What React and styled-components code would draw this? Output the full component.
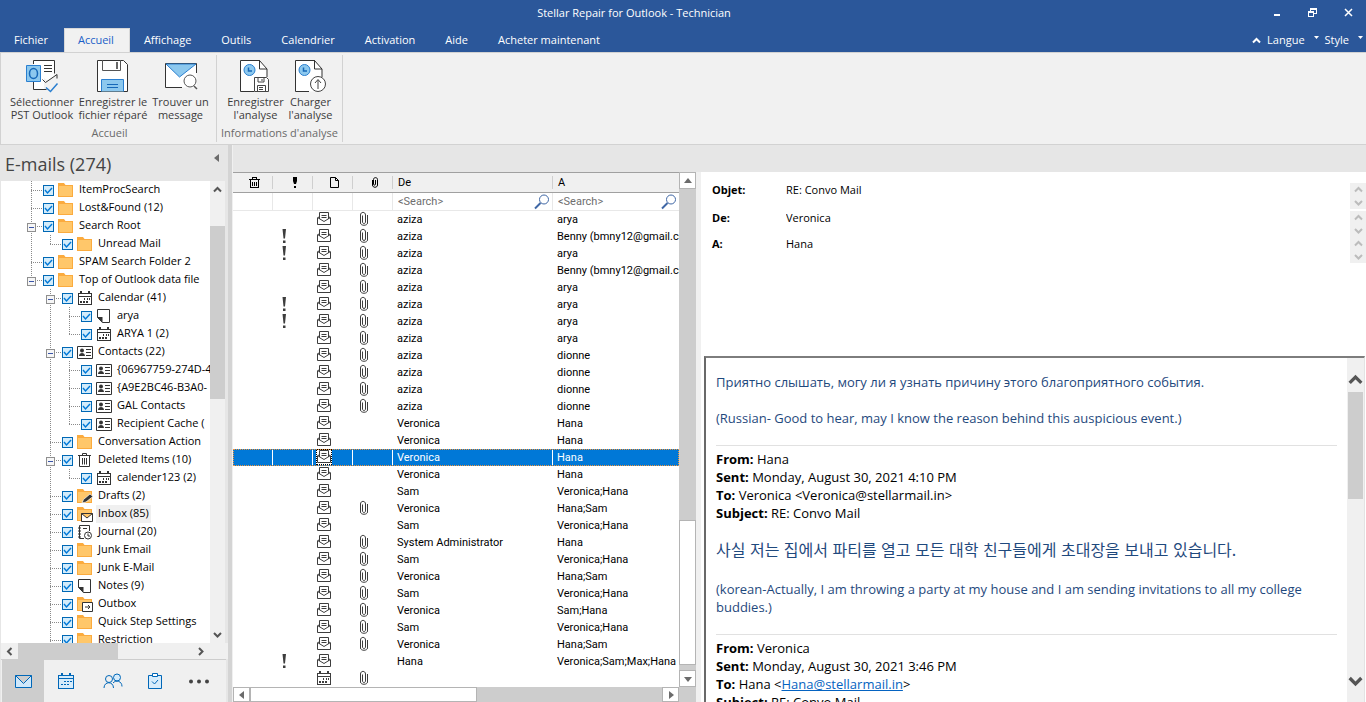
import React, { useState } from "react";
import styled, { createGlobalStyle, css } from "styled-components";

const ui = '"Open Sans", "Noto Sans", sans-serif';
const listFont = 'Roboto, "Liberation Sans", sans-serif';

const GlobalStyle = createGlobalStyle`
  * { box-sizing: border-box; }
  html, body, #root { height: 100%; }
  body { margin: 0; font: 11px/18px ${ui}; color: #000; background: #f0f0f0; }
  button, input { font: inherit; color: inherit; padding: 0; margin: 0; border: 0; background: none; }
  svg { display: block; flex: none; }
`;

const Window = styled.div`
  height: 100vh;
  display: flex;
  flex-direction: column;
  overflow: hidden;
`;

/* ---------- title bar and menu ---------- */
const TitleBar = styled.header`
  display: flex;
  align-items: center;
  height: 28px;
  flex: none;
  background: #2b579a;
  color: #fff;
`;
const Title = styled.h1`
  flex: 1;
  margin: 0;
  padding: 0 0 2px 10px;
  font-size: 11px;
  line-height: 24px;
  font-weight: 400;
  text-align: center;
`;
const WindowButtons = styled.div`
  display: flex;
  align-items: center;
  width: 108px;
  padding-bottom: 4px;
`;
const WindowButton = styled.button`
  flex: 1;
  height: 24px;
  display: grid;
  place-items: center;
`;
const MenuBar = styled.nav`
  display: flex;
  height: 24px;
  flex: none;
  background: #2b579a;
  color: #fff;
`;
const MenuTab = styled.button`
  padding: 0 15px 2px 13px;
  line-height: 20px;
  white-space: nowrap;
  border: 1px solid ${(p) => (p.$active ? "#d8d8d8" : "transparent")};
  border-bottom: 0;
  background: ${(p) => (p.$active ? "#f1f1f1" : "transparent")};
  background-clip: padding-box;
  color: ${(p) => (p.$active ? "#1a5fc8" : "#fff")};
`;
const MenuEnd = styled.div`
  display: flex;
  align-items: center;
  gap: 6px;
  margin-left: auto;
  padding-right: 3px;
`;
const MenuDrop = styled.button`
  display: flex;
  align-items: center;
  gap: 9px;
  line-height: 24px;
`;

/* ---------- ribbon ---------- */
const Ribbon = styled.section`
  display: flex;
  flex: none;
  height: 93px;
  padding-left: 2px;
  border: 1px solid #d2d2d2;
  border-right: 0;
  background: #f1f1f1;
`;
const Group = styled.div`
  display: flex;
  flex-direction: column;
  align-items: center;
  margin: 2px 0;
  padding: 0 4px;
  border-right: 1px solid #d2d2d2;
  color: #6a6a6a;
`;
const GroupButtons = styled.div`
  display: flex;
  height: 70px;
`;
const RibbonButton = styled.button`
  width: ${(p) => p.$w}px;
  display: flex;
  flex-direction: column;
  align-items: center;
  justify-content: flex-start;
  gap: 2px;
  padding-top: 5px;
  line-height: 13px;
  color: #3c3c3c;
  white-space: pre;
`;

/* ---------- folder panel ---------- */
const Main = styled.main`
  flex: 1;
  min-height: 0;
  display: flex;
  background: #e6e6e6;
`;
const Sidebar = styled.aside`
  width: 228px;
  flex: none;
  display: flex;
  flex-direction: column;
  padding-left: 1px;
`;
const Splitter = styled.div`
  width: 5px;
  flex: none;
  background: #d4d4d4;
  border-right: 1px solid #f0f0f0;
`;
const PanelHead = styled.div`
  display: flex;
  justify-content: space-between;
  align-items: flex-start;
  height: 36px;
  flex: none;
  padding: 8px 7px 0 4px;
`;
const PanelTitle = styled.h2`
  margin: 0;
  font-size: 18px;
  line-height: 22px;
  font-weight: 400;
  color: #444;
`;
const Collapse = styled.button`
  height: 10px;
  display: grid;
  place-items: center;
`;
const TreeArea = styled.div`
  flex: 1;
  min-height: 0;
  display: flex;
  margin-right: 3px;
`;
const Tree = styled.ul`
  flex: 1;
  min-width: 0;
  margin: 0;
  padding: 0 0 0 21px;
  list-style: none;
  overflow: hidden;
  background: #fff;
`;
const TreeRow = styled.li`
  display: flex;
  align-items: center;
  height: 18px;
  white-space: nowrap;
`;
const Expander = styled.button`
  width: 19px;
  height: 18px;
  flex: none;
`;
const FolderLabel = styled.label`
  display: flex;
  align-items: center;
  height: 18px;
`;
const Check = styled.input`
  appearance: none;
  width: 11px;
  height: 11px;
  margin: 0 4px 0 2px;
  flex: none;
  border: 1px solid #0068b5;
  background: #d3ecfb;
  &:checked {
    background: #d3ecfb url("data:image/svg+xml,%3Csvg xmlns='http://www.w3.org/2000/svg' width='9' height='9'%3E%3Cpath d='M1 4l2.5 3L8 2' fill='none' stroke='%230078d7' stroke-width='1.4'/%3E%3C/svg%3E");
  }
`;
const FolderName = styled.span`
  margin-left: 3px;
  padding: 0 2px 2px;
  line-height: 16px;
  background: ${(p) => (p.$active ? "#f0f0f0" : "none")};
`;
const VScroll = styled.div`
  width: ${(p) => p.$size}px;
  flex: none;
  display: flex;
  flex-direction: column;
  background: #f0f0f0;
`;
const HScroll = styled.div`
  display: flex;
  height: 16px;
  flex: none;
  background: #f0f0f0;
`;
const ScrollButton = styled.button`
  flex: 0 0 ${(p) => p.$size}px;
  display: grid;
  place-items: center;
`;
const Gap = styled.div`
  flex: ${(p) => p.$part} 1 0;
`;
const Thumb = styled.div`
  flex: ${(p) => p.$part} 1 0;
  background: #cdcdcd;
  margin: ${(p) => p.$inset || 0};
`;
const NavBar = styled.nav`
  display: flex;
  height: 43px;
  flex: none;
  margin-right: 2px;
  padding-left: 1px;
  border-top: 1px solid #cdcdcd;
  background: #f0f0f0;
`;
const NavButton = styled.button`
  width: ${(p) => p.$w}px;
  display: grid;
  place-items: center;
  background: ${(p) => (p.$active ? "#cdcdcd" : "none")};
`;

/* ---------- message list ---------- */
const ListPane = styled.section`
  width: 463px;
  flex: none;
  display: flex;
  flex-direction: column;
  padding-top: 27px;
`;
const ListBody = styled.div`
  flex: 1;
  min-height: 0;
  display: flex;
`;
const TableClip = styled.div`
  flex: 1;
  min-width: 0;
  overflow: hidden;
  background: #fff;
`;
const MailTable = styled.table`
  width: 100%;
  table-layout: fixed;
  border-spacing: 0;
  font-family: ${listFont};
  line-height: 17px;
`;
const HeadCell = styled.th`
  height: 21px;
  padding: 0 0 0 ${(p) => (p.$text ? 5 : 3)}px;
  text-align: left;
  font-weight: 400;
  border-top: 1px solid #a0a0a0;
  border-bottom: 1px solid #a0a0a0;
  background: #f0f0f0 linear-gradient(#cfcfcf, #cfcfcf) no-repeat right 3px / 1px 13px;
  background-size: ${(p) => (p.$last ? "0 0" : "1px 13px")};
  svg { margin: 0 auto; }
`;
const SearchCell = styled.td`
  height: 18px;
  padding: 0 0 0 5px;
  border-bottom: 1px solid #e8e8e8;
  border-right: ${(p) => (p.$last ? "0" : "1px solid #e8e8e8")};
`;
const SearchBox = styled.label`
  display: flex;
  align-items: center;
  padding-right: 2px;
`;
const SearchInput = styled.input`
  flex: 1;
  min-width: 0;
  height: 17px;
  outline: 0;
  &::placeholder { color: #6e6e6e; opacity: 1; }
`;
const Row = styled.tr`
  ${(p) =>
    p.$selected &&
    css`
      background: #0078d7;
      color: #fff;
      outline: 1px dotted #f0953c;
      outline-offset: -1px;
    `}
`;
const Cell = styled.td`
  height: 17px;
  padding: 0 0 0 ${(p) => (p.$icon ? 3 : 4)}px;
  overflow: hidden;
  vertical-align: top;
  white-space: nowrap;
  border-right: ${(p) => (p.$divide ? "1px solid #fff" : "0")};
`;
const IconBox = styled.span`
  display: block;
  width: 16px;
  height: 16px;
  color: #3d3d3d;
  ${(p) =>
    p.$focus &&
    css`
      background: #fff;
      outline: 1px dotted #000;
      outline-offset: -1px;
    `}
`;
const VTrack = styled.div`
  width: 17px;
  flex: none;
  display: flex;
  flex-direction: column;
  background: #cdcdcd;
`;
const HTrack = styled.div`
  display: flex;
  height: 15px;
  flex: none;
  padding-right: 17px;
  background: #cdcdcd;
`;
const BoxButton = styled.button`
  flex: 0 0 17px;
  display: grid;
  place-items: center;
  border: 1px solid #b4b4b4;
  background: #fff;
`;
const BoxThumb = styled.div`
  flex: ${(p) => p.$part} 1 0;
  border: 1px solid #b4b4b4;
  background: #fff;
`;

/* ---------- reading pane ---------- */
const Reader = styled.section`
  flex: 1;
  min-width: 0;
  display: flex;
  flex-direction: column;
  margin-top: 27px;
  border-left: 5px solid #f0f0f0;
  background: #fff;
`;
const Fields = styled.div`
  flex: none;
  height: 184px;
  padding-top: 11px;
`;
const Field = styled.div`
  display: flex;
  height: 26px;
  margin-bottom: ${(p) => (p.$after ? 2 : 0)}px;
  padding-left: 11px;
`;
const FieldLabel = styled.label`
  width: 74px;
  line-height: 14px;
  font-weight: 700;
`;
const FieldValue = styled.input`
  flex: 1;
  min-width: 0;
  height: 14px;
  outline: 0;
`;
const Spinner = styled.div`
  width: 16px;
  display: flex;
  flex-direction: column;
  background: #f0f0f0;
`;
const MessageFrame = styled.div`
  flex: 1;
  min-height: 0;
  display: flex;
  margin: 0 1px 0 3px;
  border: 2px solid #696969;
  border-top-color: #7d7d7d;
  border-right: 1px solid #e3e3e3;
  border-bottom: 0;
`;
const Message = styled.article`
  flex: 1;
  min-width: 0;
  padding: 15px 10px 0;
  overflow: hidden;
  font-size: 13px;
  line-height: 18px;
`;
const Para = styled.p`
  margin: 0 0 18px;
  color: #1f497d;
`;
const Korean = styled(Para)`
  margin-bottom: 22px;
  font: 16px/18px "Noto Sans CJK KR", sans-serif;
`;
const MailHeader = styled.p`
  margin: 0 0 18px;
  padding-top: 4px;
  border-top: 1px solid #e1e1e1;
`;
const MailLink = styled.a`
  color: #0563c1;
`;

/* ---------- drawings ---------- */
const Svg = ({ w = 16, h = 16, children, ...rest }) => (
  <svg width={w} height={h} viewBox={`0 0 ${w} ${h}`} fill="none" overflow="visible" aria-hidden="true" {...rest}>
    {children}
  </svg>
);
const Triangle = ({ dir, color = "#6b6b6b" }) => {
  const d = { up: "M0 6l4-5 4 5z", down: "M0 2l4 5 4-5z", left: "M6 0L1 4l5 4z", right: "M2 0l5 4-5 4z" }[dir];
  return <Svg w={8} h={8}><path d={d} fill={color} /></Svg>;
};
const Chevron = ({ dir, color = "#555", size = 9, weight = 2 }) => {
  const d = { up: "M1 6.5L4.500 3 8 6.500", down: "M1 3l3.500 3.500L8 3", left: "M6.500 1L3 4.500 6.500 8", right: "M3 1l3.500 3.500L3 8" }[dir];
  return <svg width={size} height={size} viewBox="0 0 9 9" fill="none" stroke={color} strokeWidth={weight} aria-hidden="true"><path d={d} /></svg>;
};
const Guide = ({ kind }) => {
  const end = { line: 18, tee: 18, end: 10, open: 18, openEnd: 10 }[kind];
  const box = kind === "open" || kind === "openEnd";
  return (
    <Svg w={19} h={18} shapeRendering="crispEdges">
      {end && <path d={`M9.500 0V${end}`} stroke="#8a8a8a" strokeDasharray="1 1" />}
      {kind !== "line" && kind !== "none" && <path d="M9 9.500H20" stroke="#8a8a8a" strokeDasharray="1 1" />}
      {box && (
        <>
          <rect x="5.500" y="6.500" width="8" height="8" fill="#f6f6f6" stroke="#8f8f8f" />
          <path d="M7 10.500h5" stroke="#3a55a8" />
        </>
      )}
    </Svg>
  );
};
const FolderShape = () => (
  <>
    <path d="M0 1h6l1.500 2H15v12H0z" fill="#fbab3e" />
    <path d="M1 4h13v10H1z" fill="#ffc76a" />
  </>
);
const CalendarShape = ({ color = "#333" }) => (
  <g shapeRendering="crispEdges">
    <path d="M1.500 3.500h13v11h-13zM1 6.500h14" stroke={color} />
    <path d="M4 1v3M12 1v3" stroke={color} strokeWidth="2" />
    <path d="M7 8h1v2H7zM10 8h1v2h-1zM12 8h1v2h-1zM3 11h2v2H3zM6 11h2v2H6zM9 11h2v2H9z" fill={color} />
  </g>
);
const folderIcons = {
  folder: <FolderShape />,
  calendar: <CalendarShape />,
  note: <><path d="M1.500 1.500h12v13h-7l-5-5z" stroke="#333" fill="#fff" /><path d="M1 9h5.500v6z" fill="#333" /></>,
  contacts: (
    <>
      <path d="M.5 2.500h15v12H.5z" stroke="#333" fill="#fff" />
      <circle cx="5" cy="6.500" r="2" fill="#333" />
      <path d="M2 12c0-4 6-4 6 0zM9 5h5v1H9zM9 8h5v1H9zM9 11h5v1H9z" fill="#333" />
    </>
  ),
  trash: <path d="M1 3.500h13M5.500 3V1.500h4V3M2.500 4v10.500h10V4M5.500 6v6.500M7.500 6v6.500M9.500 6v6.500" stroke="#333" />,
  drafts: <><FolderShape /><path d="M5 15l1.500-3.500L13 6l3 2.500-7 5.500z" fill="#333" stroke="#fff" strokeWidth=".7" /></>,
  inbox: <><FolderShape /><path d="M4.500 7.500h11v8h-11zM4.500 7.500L10 12l5.500-4.500" stroke="#333" fill="#fff" /></>,
  journal: (
    <>
      <path d="M7 14.500H2.500v-13h10V7M1 4h3M1 7h3M1 10h3M1 13h3M6 4.500h4" stroke="#333" />
      <circle cx="11" cy="11.500" r="3.500" stroke="#333" fill="#fff" /><path d="M11 9.500V12h2" stroke="#333" />
    </>
  ),
  outbox: <><FolderShape /><path d="M5.500 6.500h10v9h-10z" stroke="#333" fill="#fff" /><path d="M8 11h5M11 9l2 2-2 2" stroke="#333" /></>,
};
const MailIcon = () => (
  <Svg>
    <path d="M3.500 5.500L1.500 7v6.500h13V7l-2-1.500M3.500 8V1.500h9V8M1.500 6.500l6.500 4 6.500-4M5.500 4.500h5M5.500 6.500h5" stroke="currentColor" />
  </Svg>
);
const ClipIcon = () => (
  <Svg><path d="M11.500 4v8c0 3-7 3-7 0V4c0-3.500 5-3.500 5 0v7c0 2-3 2-3 0V4.500" stroke="#3d3d3d" /></Svg>
);
const BangIcon = () => (
  <Svg><path d="M6.500 1H10l-1 9.500H7.500zM7 12.500h2.500V15H7z" fill="#3d3d3d" /></Svg>
);
const SearchIcon = () => (
  <Svg><circle cx="10" cy="5.500" r="4.500" stroke="#3f67a5" /><path d="M6.500 9L1 14.500" stroke="#3f67a5" strokeWidth="2" /></Svg>
);
const FloppyArt = ({ x = 0, y = 0 }) => (
  <g transform={`translate(${x} ${y})`}>
    <path d="M.5.5h12l2 2v12H.5z" fill="#fff" stroke="#444" /><path d="M4 1v4h6V1M3.500 14V8.500h8V14M8 2v2M5 10.500h4M5 12.500h4" stroke="#444" />
  </g>
);
const ReportArt = () => (
  <>
    <path d="M.5.5h19l7 8.500v22.500H.5z" fill="#fff" /><path d="M14 31.500H.5V.5h19l7.500 8.500v8M19.500 0v9H27" stroke="#333" />
    <circle cx="9.500" cy="10" r="5.500" fill="#8cc8ee" stroke="#2a7fd0" /><path d="M8.500 7.500V11H12" stroke="#1668b8" strokeWidth="1.500" />
  </>
);
const ribbonIcons = {
  outlook: {
    w: 32,
    art: (
      <>
        <path d="M7.500 29.500V.5h21v16L22 21l-4-3v11.500z" fill="#fff" />
        <path d="M7.500 4V.5h21v13M7.500 22v7.500h13M16.500 19.500l3 3L31 14.500v4M18 5.500h8M18 8.500h8M18 11.500h8" stroke="#333" />
        <path d="M.5 5.500h14v16H.5z" fill="#8cc8ee" stroke="#2a7fd0" /><ellipse cx="7.500" cy="13.500" rx="4" ry="5" stroke="#1668b8" strokeWidth="1.500" />
        <path d="M20 27.500l4.500 4 7-8" stroke="#2a7fd0" strokeWidth="1.500" />
      </>
    ),
  },
  floppy: {
    w: 34,
    art: (
      <>
        <path d="M1.500.5h26l4 4v27h-30z" fill="#fff" stroke="#333" /><path d="M6.500 0v10.500h18V0" stroke="#555" /><path d="M21 2v7" stroke="#333" strokeWidth="1.500" />
        <path d="M5.500 31.500v-12h22v12" fill="#8cc8ee" stroke="#2a7fd0" /><path d="M11 24.500h11M11 27.500h11" stroke="#1668b8" />
      </>
    ),
  },
  find: {
    w: 32,
    art: (
      <>
        <path d="M.5 3.500h31v24H.5z" fill="#fff" /><path d="M17 27.500H.5v-24h31V13" stroke="#333" /><path d="M1 4h30L14.500 17z" fill="#8cc8ee" stroke="#2a7fd0" />
        <circle cx="25" cy="21" r="6" fill="#fff" stroke="#555" /><path d="M29 26l3 3" stroke="#555" strokeWidth="1.500" />
      </>
    ),
  },
  save: { w: 30, art: <><ReportArt /><FloppyArt x={14} y={17} /></> },
  load: { w: 30, art: <><ReportArt /><circle cx="23" cy="24" r="7.500" fill="#fff" stroke="#444" /><path d="M23 29v-9M20 23l3-3.500 3 3.500" stroke="#444" /></> },
};

/* ---------- data ---------- */
const folders = [
  ["tee", "folder", "ItemProcSearch"],
  ["tee", "folder", "Lost&Found (12)"],
  ["open", "folder", "Search Root"],
  ["line end", "folder", "Unread Mail"],
  ["tee", "folder", "SPAM Search Folder 2"],
  ["openEnd", "folder", "Top of Outlook data file"],
  ["none open", "calendar", "Calendar (41)"],
  ["none line tee", "note", "arya"],
  ["none line end", "calendar", "ARYA 1 (2)"],
  ["none open", "contacts", "Contacts (22)"],
  ["none line tee", "contacts", "{06967759-274D-4"],
  ["none line tee", "contacts", "{A9E2BC46-B3A0-"],
  ["none line tee", "contacts", "GAL Contacts"],
  ["none line end", "contacts", "Recipient Cache ("],
  ["none tee", "folder", "Conversation Action"],
  ["none open", "trash", "Deleted Items (10)"],
  ["none line end", "calendar", "calender123 (2)"],
  ["none tee", "drafts", "Drafts (2)"],
  ["none tee", "inbox", "Inbox (85)"],
  ["none tee", "journal", "Journal (20)"],
  ["none tee", "folder", "Junk Email"],
  ["none tee", "folder", "Junk E-Mail"],
  ["none tee", "note", "Notes (9)"],
  ["none tee", "outbox", "Outbox"],
  ["none tee", "folder", "Quick Step Settings"],
  ["none tee", "folder", "Restriction"],
];
const benny = "Benny (bmny12@gmail.co";
/* flags: "!" important, "c" attachment, "k" calendar item */
const mails = [
  ["c", "aziza", "arya"], ["!c", "aziza", benny], ["!c", "aziza", "arya"], ["c", "aziza", benny],
  ["c", "aziza", "arya"], ["!c", "aziza", "arya"], ["!c", "aziza", "arya"], ["c", "aziza", "arya"],
  ["c", "aziza", "dionne"], ["c", "aziza", "dionne"], ["c", "aziza", "dionne"], ["c", "aziza", "dionne"],
  ["", "Veronica", "Hana"], ["", "Veronica", "Hana"], ["", "Veronica", "Hana"], ["", "Veronica", "Hana"],
  ["", "Sam", "Veronica;Hana"], ["c", "Veronica", "Hana;Sam"], ["", "Sam", "Veronica;Hana"],
  ["c", "System Administrator", "Hana"], ["c", "Sam", "Veronica;Hana"], ["c", "Veronica", "Hana;Sam"],
  ["c", "Sam", "Veronica;Hana"], ["c", "Veronica", "Sam;Hana"], ["c", "Sam", "Veronica;Hana"],
  ["c", "Veronica", "Hana;Sam"], ["!", "Hana", "Veronica;Sam;Max;Hana"], ["kc", "", ""],
];
const menus = ["Fichier", "Accueil", "Affichage", "Outils", "Calendrier", "Activation", "Aide", "Acheter maintenant"];
const fields = [["objet", "Objet:", "RE: Convo Mail"], ["de", "De:", "Veronica"], ["a", "A:", "Hana"]];

function RibbonItem({ icon, label, width }) {
  return (
    <RibbonButton $w={width}>
      <Svg w={ribbonIcons[icon].w} h={33}>{ribbonIcons[icon].art}</Svg>
      {label}
    </RibbonButton>
  );
}

function FolderRow({ guides, icon, name }) {
  return (
    <TreeRow>
      {guides.split(" ").map((g, i) =>
        g.startsWith("open")
          ? <Expander key={i} aria-label={`Toggle ${name}`}><Guide kind={g} /></Expander>
          : <Guide key={i} kind={g} />
      )}
      <FolderLabel>
        <Check type="checkbox" defaultChecked />
        <Svg>{folderIcons[icon]}</Svg>
        <FolderName $active={icon === "inbox"}>{name}</FolderName>
      </FolderLabel>
    </TreeRow>
  );
}

function MailRow({ mail: [flags, from, to], selected, onSelect }) {
  return (
    <Row $selected={selected} onClick={onSelect}>
      <Cell $icon $divide={selected} />
      <Cell $icon $divide={selected}>{flags.includes("!") && <IconBox><BangIcon /></IconBox>}</Cell>
      <Cell $icon $divide={selected}>
        <IconBox $focus={selected}>{flags.includes("k") ? <Svg><CalendarShape color="#3d3d3d" /></Svg> : <MailIcon />}</IconBox>
      </Cell>
      <Cell $icon $divide={selected}>{flags.includes("c") && <IconBox><ClipIcon /></IconBox>}</Cell>
      <Cell $divide={selected}>{from}</Cell>
      <Cell>{to}</Cell>
    </Row>
  );
}

export default function App() {
  const [selected, setSelected] = useState(14);
  return (
    <Window>
      <GlobalStyle />
      <TitleBar>
        <Title>Stellar Repair for Outlook - Technician</Title>
        <WindowButtons>
          <WindowButton aria-label="Minimize"><Svg w={9} h={9}><path d="M2 7h6" stroke="#fff" strokeWidth="2" /></Svg></WindowButton>
          <WindowButton aria-label="Restore"><Svg w={9} h={9} shapeRendering="crispEdges"><path d="M.5 3.500h5v5h-5zM2.500 3V.5h6v5H6M0 4h6M2 1h7" stroke="#fff" /></Svg></WindowButton>
          <WindowButton aria-label="Close"><Svg w={9} h={9}><path d="M1 1l7 7M8 1L1 8" stroke="#fff" strokeWidth="1.500" /></Svg></WindowButton>
        </WindowButtons>
      </TitleBar>
      <MenuBar>
        {menus.map((m) => <MenuTab key={m} $active={m === "Accueil"}>{m}</MenuTab>)}
        <MenuEnd>
          <Chevron dir="up" color="#fff" />
          <MenuDrop>Langue <Svg w={5} h={8}><path d="M0 0h5L2.500 3z" fill="#fff" /></Svg></MenuDrop>
          <MenuDrop>Style <Svg w={5} h={8}><path d="M0 0h5L2.500 3z" fill="#fff" /></Svg></MenuDrop>
        </MenuEnd>
      </MenuBar>

      <Ribbon>
        <Group>
          <GroupButtons>
            <RibbonItem icon="outlook" width={70} label={"Sélectionner\nPST Outlook"} />
            <RibbonItem icon="floppy" width={72} label={"Enregistrer le\nfichier réparé"} />
            <RibbonItem icon="find" width={63} label={"Trouver un\nmessage"} />
          </GroupButtons>
          Accueil
        </Group>
        <Group>
          <GroupButtons>
            <RibbonItem icon="save" width={62} label={"Enregistrer\nl'analyse"} />
            <RibbonItem icon="load" width={48} label={"Charger\nl'analyse"} />
          </GroupButtons>
          Informations d'analyse
        </Group>
      </Ribbon>

      <Main>
        <Sidebar>
          <PanelHead>
            <PanelTitle>E-mails (274)</PanelTitle>
            <Collapse aria-label="Collapse panel"><Triangle dir="left" /></Collapse>
          </PanelHead>
          <TreeArea>
            <Tree>
              {folders.map(([guides, icon, name]) => <FolderRow key={name} guides={guides} icon={icon} name={name} />)}
            </Tree>
            <VScroll $size={15}>
              <ScrollButton $size={17} aria-label="Scroll up"><Chevron dir="up" /></ScrollButton>
              <Gap $part={28} />
              <Thumb $part={173} />
              <Gap $part={227} />
              <ScrollButton $size={17} aria-label="Scroll down"><Chevron dir="down" /></ScrollButton>
            </VScroll>
          </TreeArea>
          <HScroll>
            <ScrollButton $size={17} aria-label="Scroll left"><Chevron dir="left" /></ScrollButton>
            <Thumb $part={100} />
            <Gap $part={74} />
            <ScrollButton $size={17} aria-label="Scroll right"><Chevron dir="right" /></ScrollButton>
            <Gap $part={19} />
          </HScroll>
          <NavBar>
            <NavButton $w={42} $active aria-label="Mail"><Svg w={17} h={13}><path d="M.5.5h16v12H.5zM.5.5l8 8 8-8" fill="#cfe8fb" stroke="#0067b8" /></Svg></NavButton>
            <NavButton $w={44} aria-label="Calendar">
              <Svg w={16} h={16} shapeRendering="crispEdges"><path d="M.5 2.500h15v13H.5zM0 5.500h16" fill="#d7ecfb" stroke="#0067b8" /><path d="M4 0v3M12 0v3" stroke="#0067b8" strokeWidth="2" /><path d="M6 8h2v1H6zM9 8h2v1H9zM12 8h2v1h-2zM3 11h2v1H3zM6 11h2v1H6zM9 11h2v1H9z" fill="#0067b8" /></Svg>
            </NavButton>
            <NavButton $w={50} aria-label="People">
              <Svg w={20} h={16} stroke="#0067b8"><circle cx="6" cy="6" r="3.500" /><path d="M1 15c0-7 9.500-7 9.500 0" /><circle cx="14" cy="4.500" r="3.500" fill="#d7ecfb" /><path d="M10 10c3-3.500 9-2 9 3.500" /></Svg>
            </NavButton>
            <NavButton $w={34} aria-label="Tasks">
              <Svg w={14} h={16}><path d="M.5 2.500h13v13H.5z" fill="#d7ecfb" stroke="#0067b8" /><path d="M4.500.5h5v3h-5z" fill="#fff" stroke="#0067b8" /><path d="M4 8.500l2.500 2.500L10 7" stroke="#0067b8" /></Svg>
            </NavButton>
            <NavButton $w={54} aria-label="More"><Svg w={22} h={5}><circle cx="3" cy="2.500" r="2" fill="#444" /><circle cx="11" cy="2.500" r="2" fill="#444" /><circle cx="19" cy="2.500" r="2" fill="#444" /></Svg></NavButton>
          </NavBar>
        </Sidebar>
        <Splitter />

        <ListPane>
          <ListBody>
            <TableClip>
              <MailTable>
                <colgroup>
                  {[40, 40, 40, 40, 160].map((w, i) => <col key={i} width={w} />)}
                  <col />
                </colgroup>
                <thead>
                  <tr>
                    <HeadCell aria-label="Deleted"><Svg w={11} h={11} shapeRendering="crispEdges"><path d="M0 2.500h11M3.500 2V.5h4V2M1.500 3v7.500h8V3M3.500 5v4M5.500 5v4M7.500 5v4" stroke="#000" /></Svg></HeadCell>
                    <HeadCell aria-label="Importance"><Svg w={4} h={11}><path d="M0 0h4v4L3 7H1L0 4zM1 9h2v2H1z" fill="#000" /></Svg></HeadCell>
                    <HeadCell aria-label="Type"><Svg w={9} h={11}><path d="M.5.500h5l3 3v7h-8zM5.500.500v3h3" stroke="#000" /></Svg></HeadCell>
                    <HeadCell aria-label="Attachment"><Svg w={7} h={11}><path d="M1.500 3v5c0 3 5 3 5 0V2.500c0-2.500-4-2.500-4 0V7c0 1.500 2 1.500 2 0V3" stroke="#000" /></Svg></HeadCell>
                    <HeadCell $text>De</HeadCell>
                    <HeadCell $text $last>A</HeadCell>
                  </tr>
                </thead>
                <tbody>
                  <tr>
                    <SearchCell /><SearchCell /><SearchCell /><SearchCell />
                    <SearchCell><SearchBox><SearchInput placeholder="<Search>" aria-label="Search De" /><SearchIcon /></SearchBox></SearchCell>
                    <SearchCell $last><SearchBox><SearchInput placeholder="<Search>" aria-label="Search A" /><SearchIcon /></SearchBox></SearchCell>
                  </tr>
                  {mails.map((m, i) => <MailRow key={i} mail={m} selected={i === selected} onSelect={() => setSelected(i)} />)}
                </tbody>
              </MailTable>
            </TableClip>
            <VTrack>
              <BoxButton aria-label="Scroll up"><Triangle dir="up" /></BoxButton>
              <Gap $part={332} />
              <BoxThumb $part={144} />
              <Gap $part={5} />
              <BoxButton aria-label="Scroll down"><Triangle dir="down" /></BoxButton>
            </VTrack>
          </ListBody>
          <HTrack>
            <BoxButton aria-label="Scroll left"><Triangle dir="left" /></BoxButton>
            <BoxThumb $part={226} />
            <Gap $part={186} />
            <BoxButton aria-label="Scroll right"><Triangle dir="right" /></BoxButton>
          </HTrack>
        </ListPane>

        <Reader>
          <Fields>
            {fields.map(([id, label, value], i) => (
              <Field key={id} $after={i === 0}>
                <FieldLabel htmlFor={id}>{label}</FieldLabel>
                <FieldValue id={id} readOnly value={value} />
                <Spinner>
                  <ScrollButton $size={13} aria-label={`${label} up`}><Chevron dir="up" color="#bcbcbc" /></ScrollButton>
                  <ScrollButton $size={13} aria-label={`${label} down`}><Chevron dir="down" color="#bcbcbc" /></ScrollButton>
                </Spinner>
              </Field>
            ))}
          </Fields>
          <MessageFrame>
            <Message>
              <Para>Приятно слышать, могу ли я узнать причину этого благоприятного события.</Para>
              <Para>(Russian- Good to hear, may I know the reason behind this auspicious event.)</Para>
              <MailHeader>
                <b>From:</b> Hana<br />
                <b>Sent:</b> Monday, August 30, 2021 4:10 PM<br />
                <b>To:</b> Veronica &lt;Veronica@stellarmail.in&gt;<br />
                <b>Subject:</b> RE: Convo Mail
              </MailHeader>
              <Korean lang="ko">사실 저는 집에서 파티를 열고 모든 대학 친구들에게 초대장을 보내고 있습니다.</Korean>
              <Para>(korean-Actually, I am throwing a party at my house and I am sending invitations to all my college buddies.)</Para>
              <MailHeader>
                <b>From:</b> Veronica<br />
                <b>Sent:</b> Monday, August 30, 2021 3:46 PM<br />
                <b>To:</b> Hana &lt;<MailLink href="mailto:Hana@stellarmail.in">Hana@stellarmail.in</MailLink>&gt;<br />
                <b>Subject:</b> RE: Convo Mail
              </MailHeader>
            </Message>
            <VScroll $size={17}>
              <Gap $part={13} />
              <ScrollButton $size={17} aria-label="Scroll up"><Chevron dir="up" size={15} /></ScrollButton>
              <Gap $part={4} />
              <Thumb $part={107} $inset="0 1px" />
              <Gap $part={174} />
              <ScrollButton $size={17} aria-label="Scroll down"><Chevron dir="down" size={15} /></ScrollButton>
              <Gap $part={13} />
            </VScroll>
          </MessageFrame>
        </Reader>
      </Main>
    </Window>
  );
}
